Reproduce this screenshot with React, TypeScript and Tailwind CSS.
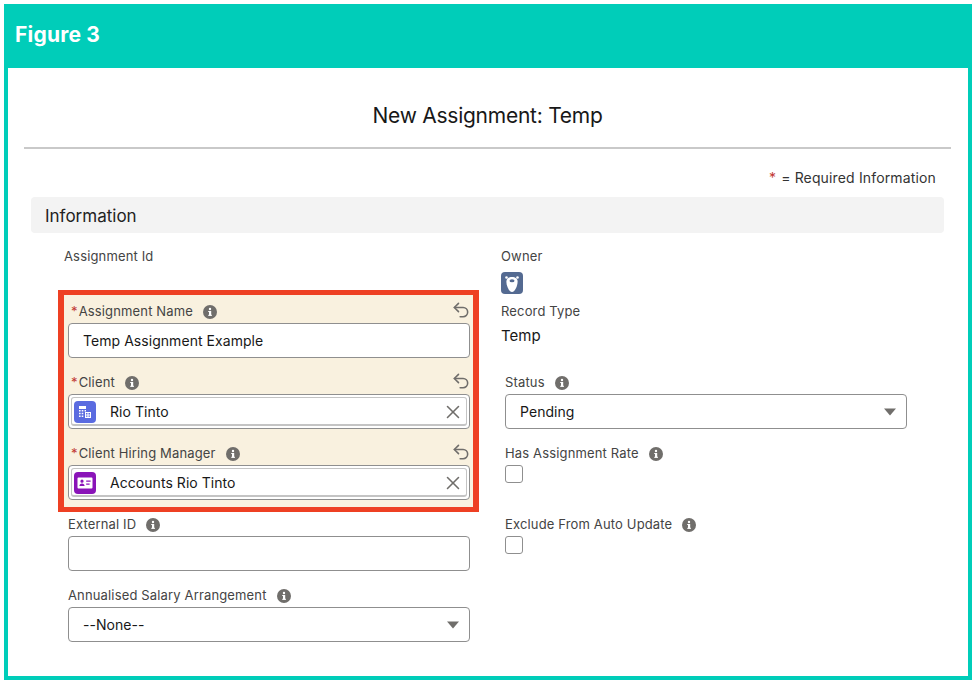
import { Undo2, X } from "lucide-react";
import type { ReactNode } from "react";

function InfoIcon() {
  return (
    <svg width="14" height="14" viewBox="0 0 14 14" className="shrink-0">
      <circle cx="7" cy="7" r="7" fill="#706e6b" />
      <rect x="6" y="6" width="2.2" height="4.6" fill="#fff" />
      <rect x="5.2" y="6" width="1.4" height="1" fill="#fff" />
      <rect x="5.2" y="9.8" width="3.8" height="1" fill="#fff" />
      <circle cx="7" cy="4" r="1.2" fill="#fff" />
    </svg>
  );
}

function Caret() {
  return (
    <svg width="12" height="8" viewBox="0 0 12 8" className="shrink-0">
      <path d="M0 0.5h12L6 7.5z" fill="#706e6b" />
    </svg>
  );
}

function BuildingIcon() {
  return (
    <div className="flex h-[22px] w-[22px] shrink-0 items-center justify-center rounded-[4px] bg-[#5a6be0]">
      <svg width="16" height="16" viewBox="0 0 16 16" fill="#fff">
        <path d="M2 2h7v3H2zM2 6h1.600v1.600H2zM4.700 6h1.600v1.600H4.700zM2 8.700h1.600v1.600H2zM4.700 8.700h1.600v1.600H4.700zM2 11.400h1.600V13H2zM4.700 11.400h1.600V13H4.700z" />
        <path d="M7.600 6H9v1.600H7.600zM8 8h6v6H8zm1 1v1.400h1.500V9zm2.500 0v1.400H13V9zM9 11.400v1.400h1.500v-1.400zm2.500 0v1.400H13v-1.400z" fillRule="evenodd" />
      </svg>
    </div>
  );
}

function ContactIcon() {
  return (
    <div className="flex h-[22px] w-[22px] shrink-0 items-center justify-center rounded-[4px] bg-[#8a14b8]">
      <svg width="16" height="12" viewBox="0 0 16 12" fill="#fff">
        <path
          fillRule="evenodd"
          d="M1.400 0.500h13.200c.6 0 .9.400.9.900v9.200c0 .5-.3.900-.9.900H1.400c-.6 0-.9-.4-.9-.9V1.400c0-.5.300-.9.900-.9zM5 2.600a1.600 1.600 0 100 3.200 1.600 1.600 0 000-3.200zM2.400 8.900h5.200c0-1.500-1.100-2.400-2.600-2.400s-2.600.9-2.600 2.400zM9.200 3.600v1.100h4.400V3.600zm0 3v1.100h3.400V6.600z"
        />
      </svg>
    </div>
  );
}

function BearAvatar() {
  return (
    <div className="h-[22px] w-[22px] rounded-[4px] bg-[#546a91]">
      <svg width="22" height="22" viewBox="0 0 22 22" fill="#fff">
        <circle cx="5.500" cy="5.500" r="1.300" />
        <circle cx="16.500" cy="5.500" r="1.300" />
        <path d="M11 5c3.400 0 5.600 1.700 5.600 4.600 0 4.400-2.600 10.400-5.600 10.400S5.400 14 5.400 9.600C5.400 6.700 7.600 5 11 5z" />
        <ellipse cx="11" cy="8.800" rx="2.500" ry="1.500" fill="#546a91" />
      </svg>
    </div>
  );
}

function Label({
  text,
  required,
  info = true,
  revert,
}: {
  text: string;
  required?: boolean;
  info?: boolean;
  revert?: boolean;
}) {
  return (
    <div className="flex h-6 items-center pt-[2px] text-[13px] tracking-[0.15px] text-[#444]">
      {required && <span className="ml-[3px] mr-[1px] text-[#c23934]">*</span>}
      <span>{text}</span>
      {info && (
        <span className="ml-[10px]">
          <InfoIcon />
        </span>
      )}
      {revert && (
        <Undo2
          size={20}
          strokeWidth={1.900}
          className="-mr-[1px] mb-[5px] ml-auto shrink-0 text-[#706e6b]"
        />
      )}
    </div>
  );
}

function Box({ children, className = "" }: { children?: ReactNode; className?: string }) {
  return (
    <div
      className={`flex h-[35px] w-full items-center rounded-[4px] border border-[#8f8f8f] bg-white text-[14px] tracking-[0.05px] text-[#181818] ${className}`}
    >
      {children}
    </div>
  );
}

function Lookup({ icon, value }: { icon: ReactNode; value: string }) {
  return (
    <Box className="p-[2px]">
      <div className="flex h-full w-full items-center rounded-[3px] border border-b-2 border-[#c4c4c4] pl-[2px] pr-[2px] pt-[1px]">
        {icon}
        <span className="ml-[14px]">{value}</span>
        <X size={22} strokeWidth={1.700} className="ml-auto text-[#706e6b]" />
      </div>
    </Box>
  );
}

function Select({ value }: { value: string }) {
  return (
    <Box className="justify-between pl-[14px] pr-[10px]">
      <span>{value}</span>
      <Caret />
    </Box>
  );
}

function Checkbox() {
  return <div className="h-[18px] w-[18px] rounded-[3px] border border-[#8f8f8f] bg-white" />;
}

export default function App() {
  return (
    <div
      className="h-[684px] w-[976px] overflow-hidden bg-white p-1"
      style={{ fontFamily: "Inter, 'Liberation Sans', sans-serif" }}
    >
      <div className="flex h-[676px] flex-col">
        <div className="flex h-16 items-center bg-[#00cdb9] pb-[2px] pl-[11px] text-[21px] font-bold tracking-[0.2px] text-white">
          Figure 3
        </div>
        <div className="flex-1 border-x-4 border-b-4 border-[#00cdb9]">
          <div className="ml-4 mr-[17px] flex h-[81px] items-center justify-center border-b-2 border-[#c9c9c9] pt-[17px] text-[21px] tracking-[-0.25px] text-[#181818]">
            New Assignment: Temp
          </div>
          <div className="mr-8 mt-[18px] flex h-5 items-center justify-end text-[14px] tracking-[0.15px] text-[#333]">
            <span className="mr-[5px] text-[#c23934]">*</span>= Required Information
          </div>
          <div className="ml-[23px] mr-6 mt-[10px] flex h-9 items-center rounded-[4px] bg-[#f3f3f3] pl-[14px] pt-1 text-[17px] text-[#222]">
            Information
          </div>
          <div className="ml-[50px] mt-[11px] flex">
            <div className="w-[421px]">
              <div className="h-[46px] pl-[6px] pt-[1px]">
                <div className="flex h-6 items-center text-[13px] tracking-[0.15px] text-[#444]">
                  Assignment Id
                </div>
              </div>
              <div className="box-border h-[222px] border-x-[6px] border-y-[5px] border-[#ee4023] bg-[#f9f1df] pl-1 pr-[3px] pt-1">
                <Label text="Assignment Name" required revert />
                <Box className="pl-[14px]">Temp Assignment Example</Box>
                <div className="mt-3">
                  <Label text="Client" required revert />
                  <Lookup icon={<BuildingIcon />} value="Rio Tinto" />
                </div>
                <div className="mt-3">
                  <Label text="Client Hiring Manager" required revert />
                  <Lookup icon={<ContactIcon />} value="Accounts Rio Tinto" />
                </div>
              </div>
              <div className="ml-[10px] w-[402px]">
                <Label text="External ID" />
                <Box />
                <div className="mt-3">
                  <Label text="Annualised Salary Arrangement" />
                  <Select value="--None--" />
                </div>
              </div>
            </div>
            <div className="ml-[22px] w-[406px]">
              <div className="flex h-[25px] items-center pt-[1px] text-[13px] tracking-[0.15px] text-[#444]">
                Owner
              </div>
              <div className="mt-[3px]">
                <BearAvatar />
              </div>
              <div className="mt-[6px] flex h-6 items-center text-[13px] tracking-[0.15px] text-[#444]">
                Record Type
              </div>
              <div className="flex h-6 items-center text-[15px] text-[#181818]">
                Temp
              </div>
              <div className="mt-[22px] pl-1">
                <Label text="Status" />
                <Select value="Pending" />
                <div className="mt-3">
                  <Label text="Has Assignment Rate" />
                  <Checkbox />
                </div>
                <div className="mt-[29px]">
                  <Label text="Exclude From Auto Update" />
                  <Checkbox />
                </div>
              </div>
            </div>
          </div>
        </div>
      </div>
    </div>
  );
}
